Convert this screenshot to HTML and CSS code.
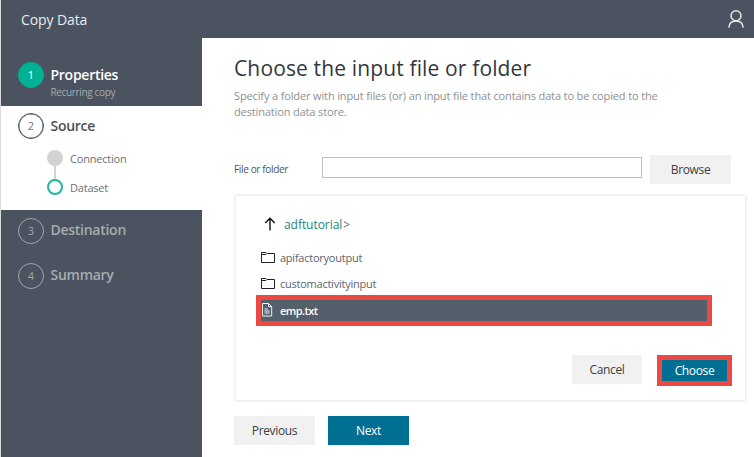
FILE: index.html
```html
<!DOCTYPE html>
<html lang="en">
<head>
<meta charset="utf-8">
<title>Copy Data</title>
<link rel="stylesheet" href="styles.css">
</head>
<body>
<div class="app">
  <header class="topbar">
    <span class="app-title">Copy Data</span>
    <svg class="user" width="18" height="20" viewBox="0 0 18 20" fill="none" stroke="#e4e6e8" stroke-width="1.5"><circle cx="9" cy="6.8" r="5"/><path d="M1.800 18.600C2.100 14.500 4.800 11.900 9 11.900s6.900 2.600 7.200 6.700"/></svg>
  </header>
  <div class="body">
    <nav class="sidebar">
      <div class="step step-done">
        <span class="num">1</span>
        <div><div class="label">Properties</div><div class="sub">Recurring copy</div></div>
      </div>
      <div class="current">
        <div class="step"><span class="num">2</span><div class="label">Source</div></div>
        <ul class="substeps">
          <li><i class="dot"></i><span>Connection</span></li>
          <li><i class="dot dot-active"></i><span>Dataset</span></li>
        </ul>
      </div>
      <div class="step step-next"><span class="num">3</span><div class="label">Destination</div></div>
      <div class="step step-next"><span class="num">4</span><div class="label">Summary</div></div>
    </nav>
    <main class="main">
      <h1>Choose the input file or folder</h1>
      <p class="desc">Specify a folder with input files (or) an input file that contains data to be copied to the<br>destination data store.</p>
      <div class="field">
        <label for="path">File or folder</label>
        <input id="path" type="text">
        <button class="btn btn-browse">Browse</button>
      </div>
      <section class="picker">
        <div class="crumbs">
          <svg width="12" height="14" viewBox="0 0 12 14" fill="none" stroke="#111" stroke-width="1.4"><path d="M6 13.500V1.200M1.200 6 6 1.200 10.800 6"/></svg>
          <a>adftutorial</a><span class="gt">&gt;</span>
        </div>
        <ul class="files">
          <li><svg width="14" height="13" viewBox="0 0 14 13" fill="none" stroke="#222"><path d="M.5 1.500h4.500l1 1h7.500v9h-13zM.5 3.500h4.500l1-1"/></svg><span>apifactoryoutput</span></li>
          <li><svg width="14" height="13" viewBox="0 0 14 13" fill="none" stroke="#222"><path d="M.5 1.500h4.500l1 1h7.500v9h-13zM.5 3.500h4.500l1-1"/></svg><span>customactivityinput</span></li>
          <li class="selected"><svg width="14" height="14" viewBox="0 0 14 14" fill="none" stroke="#f2f3f4"><path d="M1.500.5h6l3.200 3.200v9.300h-9.200zM7.500.5v3.200h3.200M3.500 6h3M3.500 8h5M3.500 10h5"/></svg><span class="file-selected">emp.txt</span></li>
        </ul>
        <div class="picker-actions">
          <button class="btn btn-cancel">Cancel</button>
          <div class="highlight"><button class="btn btn-choose">Choose</button></div>
        </div>
      </section>
      <div class="wizard-actions">
        <button class="btn btn-prev">Previous</button>
        <button class="btn btn-next">Next</button>
      </div>
    </main>
  </div>
</div>
</body>
</html>
```
FILE: styles.css
```css
* { box-sizing: border-box; }
body { margin: 0; font-family: "Open Sans", "Noto Sans", sans-serif; background: #fff; }
ul { list-style: none; margin: 0; padding: 0; }
.app { width: 754px; height: 457px; overflow: hidden; border-left: 1px solid #dcdcdc; display: flex; flex-direction: column; }
.topbar { height: 38px; flex: none; background: #4a535f; display: flex; justify-content: space-between; padding: 0 9px 0 20px; }
.app-title { color: #e8eaec; font-size: 14px; line-height: 40px; letter-spacing: -0.1px; }
.user { margin-top: 9px; }
.body { flex: 1; display: flex; }
.sidebar { width: 201px; background: #4a535f; padding-top: 24px; flex: none; }
.step { display: flex; gap: 6.5px; padding-left: 17px; height: 26px; }
.num { width: 26px; height: 26px; border-radius: 50%; border: 1.5px solid #4a535f; box-shadow: inset 0 0 0 0.5px #4a535f; font-size: 11px; line-height: 23px; text-align: center; color: #6d747d; flex: none; }
.label { font-size: 14px; font-weight: 600; line-height: 25px; letter-spacing: -0.27px; color: #4a4f56; }
.step-done { height: 44px; }
.step-done .num { background: #00b294; border-color: #00b294; box-shadow: none; color: #fff; }
.step-done .label { color: #fff; }
.sub { color: #a6abb0; font-size: 10px; line-height: 10px; letter-spacing: -0.35px; }
.current { background: #fff; height: 104px; padding-top: 7px; margin-bottom: 8px; }
.substeps { padding: 11px 0 0 46px; }
.substeps li { display: flex; align-items: center; gap: 7px; height: 16px; font-size: 11px; letter-spacing: -0.2px; color: #6b6f74; }
.substeps li + li { margin-top: 13px; }
.dot { width: 16px; height: 16px; border-radius: 50%; background: #d2d2d2; position: relative; }
.dot-active { background: #fff; border: 2px solid #1db99d; }
.dot-active::before { content: ""; position: absolute; left: 5px; top: -16px; width: 2px; height: 14px; background: #d2d2d2; }
.step-next { margin-bottom: 19px; }
.step-next .num { border-color: #a3a6aa; box-shadow: none; color: #a3a6aa; }
.step-next .label { color: #a8abae; line-height: 24px; }
.main { flex: 1; padding: 14px 0 0 32px; }
h1 { margin: 0; font-size: 21px; font-weight: 400; line-height: 32px; color: #33373c; letter-spacing: 0.14px; white-space: nowrap; }
.desc { margin: 4px 0 0; font-size: 11px; line-height: 16px; letter-spacing: -0.135px; color: #8d9094; white-space: nowrap; }
.field { display: flex; align-items: flex-start; margin-top: 35px; height: 29px; }
label { width: 88px; font-size: 10px; line-height: 28px; color: #50545a; letter-spacing: -0.35px; }
input { width: 320px; height: 21px; margin-top: 2px; border: 1px solid #bebfc2; background: #fff; padding: 0 4px; }
.btn { font-family: inherit; font-size: 12px; height: 29px; line-height: 29px; border: 0; padding: 0; background: #f1f1f1; color: #3b3f44; letter-spacing: -0.35px; }
.btn-browse { width: 81px; margin-left: 8px; }
.picker { width: 509px; height: 204px; margin: 12px 0 0 2px; background: #fff; box-shadow: 0 0 3px 1px #e6e6e6; padding: 16px 13px 0 20px; }
.crumbs { display: flex; align-items: center; height: 24px; padding-left: 8px; font-size: 12px; color: #666; }
.crumbs a { color: #238383; margin-left: 8px; letter-spacing: -0.05px; }
.gt { margin-left: 1px; }
.files { margin-top: 8px; }
.files li { height: 26px; display: flex; align-items: center; gap: 5px; padding-left: 5px; font-size: 11px; letter-spacing: -0.24px; color: #606469; }
.files .selected { width: 456px; height: 31px; margin-top: -1px; background: #545f6c; border: 5px solid #ea4a43; padding-left: 0; color: #fff; }
.selected > * { margin-top: -1px; }
.file-selected { font-weight: 600; letter-spacing: -0.55px; }
.picker-actions { display: flex; justify-content: flex-end; gap: 15px; margin-top: 29px; }
.btn-cancel { width: 70px; }
.highlight { border: 5px solid #ea4a43; width: 75px; height: 31px; }
.btn-choose { width: 65px; height: 21px; line-height: 19px; background: #006f94; color: #fff; display: block; }
.wizard-actions { display: flex; gap: 13px; margin-top: 16px; }
.btn-prev, .btn-next { width: 81px; }
.btn-next { background: #006f94; color: #fff; }
```
